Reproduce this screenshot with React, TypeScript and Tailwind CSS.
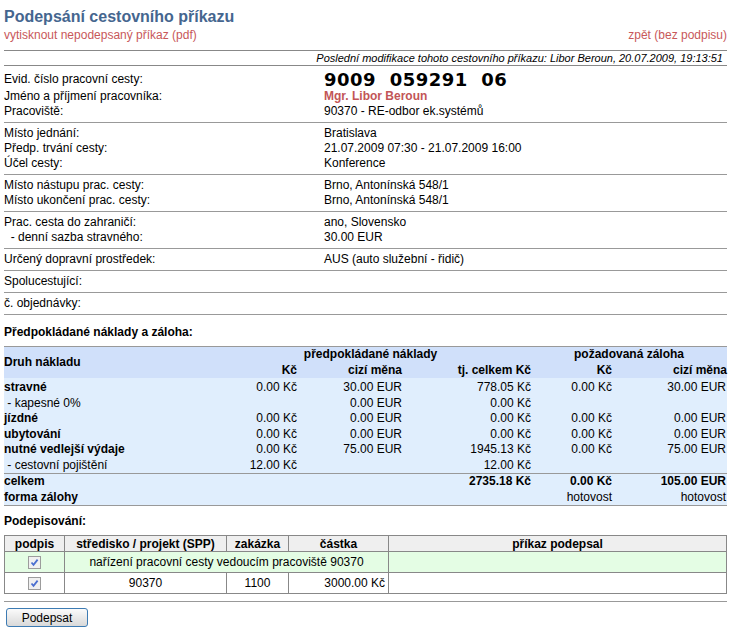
const font = { fontFamily: '"Liberation Sans", Arial, sans-serif' };

const Check = () => (
  <span className="inline-flex h-[13px] w-[13px] items-center justify-center border border-[#9c9c9c] bg-[#f0f0f0] align-middle">
    <svg width="9" height="9" viewBox="0 0 9 9">
      <path d="M1.5 4.5 L3.5 6.8 L7.6 1.6" fill="none" stroke="#4b6fd0" strokeWidth="1.8" />
    </svg>
  </span>
);

const InfoRow = ({ label, value, valueClass = "" }: { label: string; value?: React.ReactNode; valueClass?: string }) => (
  <div className="flex h-[15px] items-center leading-[15px]">
    <div className="w-[320px] shrink-0">{label}</div>
    <div className={valueClass}>{value}</div>
  </div>
);

const Group = ({ children }: { children: React.ReactNode }) => (
  <div className="border-b border-[#999] py-[3px]">{children}</div>
);

type CostRow = { name: string; bold?: boolean; a?: string; b?: string; c?: string; d?: string; e?: string };

const costs: CostRow[] = [
  { name: "stravné", bold: true, a: "0.00 Kč", b: "30.00 EUR", c: "778.05 Kč", d: "0.00 Kč", e: "30.00 EUR" },
  { name: "\u00a0- kapesné 0%", b: "0.00 EUR", c: "0.00 Kč" },
  { name: "jízdné", bold: true, a: "0.00 Kč", b: "0.00 EUR", c: "0.00 Kč", d: "0.00 Kč", e: "0.00 EUR" },
  { name: "ubytování", bold: true, a: "0.00 Kč", b: "0.00 EUR", c: "0.00 Kč", d: "0.00 Kč", e: "0.00 EUR" },
  { name: "nutné vedlejší výdaje", bold: true, a: "0.00 Kč", b: "75.00 EUR", c: "1945.13 Kč", d: "0.00 Kč", e: "75.00 EUR" },
  { name: "\u00a0- cestovní pojištění", a: "12.00 Kč", c: "12.00 Kč" },
];

export default function App() {
  return (
    <div className="min-h-[637px] bg-white px-[4px] pt-[7px] text-[12px] text-black" style={font}>
      <h1 className="text-[16px] font-bold leading-[20px] text-[#45668f]">Podepsání cestovního příkazu</h1>
      <div className="mt-[0px] flex h-[16px] items-center justify-between text-[#c8585a]">
        <a className="cursor-pointer">vytisknout nepodepsaný příkaz (pdf)</a>
        <a className="cursor-pointer">zpět (bez podpisu)</a>
      </div>

      <div className="mt-[7px] border-t border-[#888]" />
      <div className="h-[14px] pr-[4px] text-right text-[11px] italic leading-[14px]">
        Poslední modifikace tohoto cestovního příkazu: Libor Beroun, 20.07.2009, 19:13:51
      </div>
      <div className="border-t border-[#888]" />

      <Group>
        <div className="flex h-[20px] items-center">
          <div className="w-[320px] shrink-0">Evid. číslo pracovní cesty:</div>
          <div
            className="whitespace-pre text-[18px] font-bold tracking-[0.5px]"
            style={{ fontFamily: '"DejaVu Sans", Verdana, sans-serif' }}
          >
            {"9009  059291  06"}
          </div>
        </div>
        <InfoRow label="Jméno a příjmení pracovníka:" value="Mgr. Libor Beroun" valueClass="font-bold text-[#c25556]" />
        <InfoRow label="Pracoviště:" value="90370 - RE-odbor ek.systémů" />
      </Group>
      <Group>
        <InfoRow label="Místo jednání:" value="Bratislava" />
        <InfoRow label="Předp. trvání cesty:" value="21.07.2009 07:30 - 21.07.2009 16:00" />
        <InfoRow label="Účel cesty:" value="Konference" />
      </Group>
      <Group>
        <InfoRow label="Místo nástupu prac. cesty:" value="Brno, Antonínská 548/1" />
        <InfoRow label="Místo ukončení prac. cesty:" value="Brno, Antonínská 548/1" />
      </Group>
      <Group>
        <InfoRow label="Prac. cesta do zahraničí:" value="ano, Slovensko" />
        <InfoRow label={"\u00a0 - denní sazba stravného:"} value="30.00 EUR" />
      </Group>
      <Group>
        <InfoRow label="Určený dopravní prostředek:" value="AUS (auto služební - řidič)" />
      </Group>
      <Group>
        <InfoRow label="Spolucestující:" />
      </Group>
      <Group>
        <InfoRow label="č. objednávky:" />
      </Group>

      <div className="mt-[10px] h-[15px] font-bold leading-[15px]">Předpokládané náklady a záloha:</div>

      <table className="mt-[6px] w-full table-fixed border-collapse border-y border-[#999] leading-[15.5px]">
        <colgroup>
          <col className="w-[206px]" />
          <col className="w-[87px]" />
          <col className="w-[105px]" />
          <col className="w-[129px]" />
          <col className="w-[81px]" />
          <col />
        </colgroup>
        <thead className="bg-[#d0e0fa] font-bold">
          <tr>
            <th rowSpan={2} className="p-0 text-left align-middle">Druh nákladu</th>
            <th colSpan={3} className="h-[15.5px] p-0 text-center">předpokládané náklady</th>
            <th colSpan={2} className="p-0 text-center">požadovaná záloha</th>
          </tr>
          <tr className="text-right">
            <th className="h-[15.5px] p-0 text-right">Kč</th>
            <th className="p-0 text-right">cizí měna</th>
            <th className="p-0 text-right">tj. celkem Kč</th>
            <th className="p-0 text-right">Kč</th>
            <th className="p-0 text-right">cizí měna</th>
          </tr>
        </thead>
        <tbody className="bg-[#e0eefd]">
          <tr>
            <td colSpan={6} className="h-[2px] p-0" />
          </tr>
          {costs.map((r) => (
            <tr key={r.name} className="h-[15.5px]">
              <td className={`p-0 ${r.bold ? "font-bold" : ""}`}>{r.name}</td>
              <td className="p-0 text-right">{r.a}</td>
              <td className="p-0 text-right">{r.b}</td>
              <td className="p-0 text-right">{r.c}</td>
              <td className="p-0 text-right">{r.d}</td>
              <td className="p-0 pr-[1px] text-right">{r.e}</td>
            </tr>
          ))}
          <tr className="h-[15.5px] border-t border-[#999] font-bold">
            <td className="p-0">celkem</td>
            <td className="p-0" />
            <td className="p-0" />
            <td className="p-0 text-right">2735.18 Kč</td>
            <td className="p-0 text-right">0.00 Kč</td>
            <td className="p-0 pr-[1px] text-right">105.00 EUR</td>
          </tr>
          <tr className="h-[15.5px]">
            <td className="p-0 font-bold">forma zálohy</td>
            <td className="p-0" />
            <td className="p-0" />
            <td className="p-0" />
            <td className="p-0 text-right">hotovost</td>
            <td className="p-0 pr-[1px] text-right">hotovost</td>
          </tr>
        </tbody>
      </table>

      <div className="mt-[8px] h-[15px] font-bold leading-[15px]">Podepisování:</div>

      <table className="mt-[6px] w-full table-fixed border-collapse border border-[#888]">
        <colgroup>
          <col className="w-[60px]" />
          <col className="w-[162px]" />
          <col className="w-[62px]" />
          <col className="w-[100px]" />
          <col />
        </colgroup>
        <thead className="bg-[#efefef] font-bold">
          <tr className="h-[16px] leading-[14px]">
            <th className="border border-[#888] p-0 text-center">podpis</th>
            <th className="border border-[#888] p-0 text-center">středisko / projekt (SPP)</th>
            <th className="border border-[#888] p-0 text-center">zakázka</th>
            <th className="border border-[#888] p-0 text-center">částka</th>
            <th className="border border-[#888] p-0 text-center">příkaz podepsal</th>
          </tr>
        </thead>
        <tbody>
          <tr className="h-[21px] bg-[#e4fde4]">
            <td className="border border-[#888] p-0 text-center">
              <Check />
            </td>
            <td colSpan={3} className="border border-[#888] p-0 text-center">
              nařízení pracovní cesty vedoucím pracoviště 90370
            </td>
            <td className="border border-[#888] p-0" />
          </tr>
          <tr className="h-[21px]">
            <td className="border border-[#888] p-0 text-center">
              <Check />
            </td>
            <td className="border border-[#888] p-0 text-center">90370</td>
            <td className="border border-[#888] p-0 text-center">1100</td>
            <td className="border border-[#888] p-0 pr-[3px] text-right">3000.00 Kč</td>
            <td className="border border-[#888] p-0" />
          </tr>
        </tbody>
      </table>

      <div className="mt-[7px] border-t border-[#999]" />
      <button
        className="ml-[2px] mt-[6px] flex h-[19px] w-[82px] items-center justify-center rounded-[3px] border border-[#3d7bb3] bg-linear-to-b from-[#fbfbfb] to-[#d9d9d9] text-[12px] leading-[14px] text-black"
        style={font}
      >
        Podepsat
      </button>
    </div>
  );
}
